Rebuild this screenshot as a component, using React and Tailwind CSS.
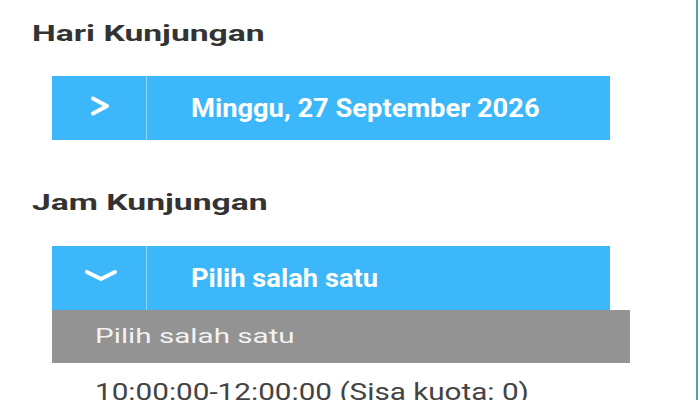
const ChevronRight = () => (
  <svg width="22" height="20" viewBox="0 0 22 20" fill="none" stroke="white" strokeWidth="4" strokeLinecap="round" strokeLinejoin="round">
    <path d="M4 2.5L18 10L4 17.5" />
  </svg>
);

const ChevronDown = () => (
  <svg width="34" height="13" viewBox="0 0 34 13" fill="none" stroke="white" strokeWidth="4" strokeLinecap="round" strokeLinejoin="round">
    <path d="M3 3L17 10L31 3" />
  </svg>
);

const BlueBar = ({ down, children }) => (
  <div className="ml-5 flex h-[64px] w-[558px] bg-[#3bb7fa]">
    <div className={`flex w-[95px] items-center justify-center border-r border-[#8fd6fc] ${down ? "pb-[6px] pl-[4px]" : "pb-[4px] pl-[2px]"}`}>
      {down ? <ChevronDown /> : <ChevronRight />}
    </div>
    <div className="flex flex-1 items-center pl-[44px]">
      <span className="inline-block origin-left scale-x-[1.05] whitespace-nowrap text-[26px] font-bold text-white">
        {children}
      </span>
    </div>
  </div>
);

export default function App() {
  return (
    <div className="flex h-[400px] w-[700px] overflow-hidden bg-white font-['Roboto',sans-serif]">
      <div className="flex-1 pl-8 pt-[22px]">
        <h2 className="h-6 text-[22px] font-bold leading-6 text-[#333]">
          <span className="inline-block origin-left scale-x-[1.53] whitespace-nowrap">Hari Kunjungan</span>
        </h2>
        <div className="mt-[30px]">
          <BlueBar>Minggu, 27 September 2026</BlueBar>
        </div>
        <h2 className="mt-[51px] h-6 text-[22px] font-bold leading-6 text-[#333]">
          <span className="inline-block origin-left scale-x-[1.53] whitespace-nowrap">Jam Kunjungan</span>
        </h2>
        <div className="mt-[31px]">
          <BlueBar down>Pilih salah satu</BlueBar>
        </div>
        <div className="ml-5 flex h-[53px] w-[578px] items-center bg-[#939393] pl-[43px] text-[21px] text-[#f2f2f2]">
          <span className="inline-block origin-left scale-x-[1.41] whitespace-nowrap">Pilih salah satu</span>
        </div>
        <div className="ml-5 pl-[43px] pt-[18px] text-[23px] leading-6 text-[#444]">
          <span className="inline-block origin-left scale-x-[1.29] whitespace-nowrap">10:00:00-12:00:00 (Sisa kuota: 0)</span>
        </div>
      </div>
      <div className="mr-[2px] w-[2px] bg-[#4ba4b9]" />
    </div>
  );
}
